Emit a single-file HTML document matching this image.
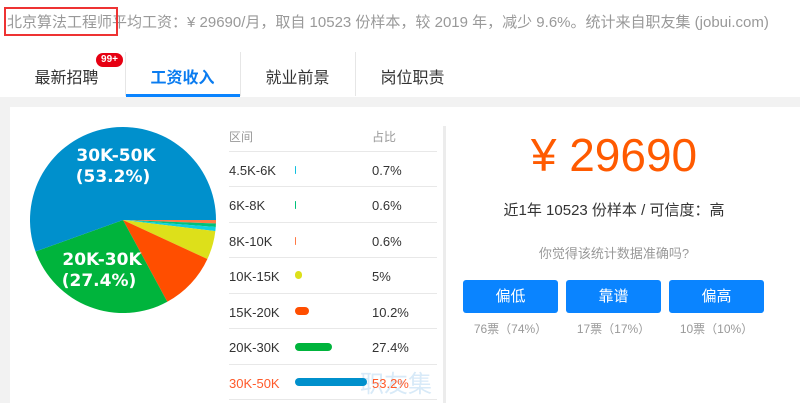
<!DOCTYPE html>
<html><head><meta charset="utf-8"><style>
*{margin:0;padding:0;box-sizing:border-box}
body{width:800px;height:403px;overflow:hidden;background:#fff;font-family:"Liberation Sans","Noto Sans CJK SC",sans-serif;position:relative}
.a{position:absolute;white-space:nowrap}
.top{left:7px;top:11px;font-size:15px;color:#999}
.rbox{left:4px;top:7px;width:114px;height:29px;border:2px solid #e33}
.tab{top:64px;font-size:16px;color:#333;width:115px;text-align:center}
.sep{top:52px;width:1px;height:44px;background:#e6e6e6}
.gray{left:0;top:97px;width:800px;height:306px;background:#f2f2f2}
.panel{left:10px;top:107px;width:790px;height:296px;background:#fff}
.row{left:229px;width:208px;height:1px;background:#e8e8e8}
.lbl{left:229px;font-size:13px;color:#333}
.pct{left:372px;font-size:13px;color:#333}
.bar{left:295px;height:8px;border-radius:4px}
.btn{top:280px;width:95px;height:33px;background:#0a84ff;border-radius:3px;color:#fff;font-size:15px;text-align:center;line-height:33px}
.vote{top:320px;font-size:12px;color:#999;width:95px;text-align:center}
</style></head><body>
<div class="a top">北京算法工程师平均工资：¥ 29690/月，取自 10523 份样本，较 2019 年，减少 9.6%。统计来自职友集 (jobui.com)</div>
<div class="a rbox"></div>
<div class="a tab" style="left:9px">最新招聘</div>
<div class="a" style="left:96px;top:53px;width:27px;height:14px;background:#e60012;border-radius:7px;color:#fff;font-size:10px;font-weight:bold;text-align:center;line-height:14px">99+</div>
<div class="a tab" style="left:125px;color:#0a7cf0;font-weight:bold">工资收入</div>
<div class="a" style="left:126px;top:94px;width:114px;height:3px;background:#0a84ff"></div>
<div class="a tab" style="left:240px">就业前景</div>
<div class="a tab" style="left:355px">岗位职责</div>
<div class="a sep" style="left:125px"></div>
<div class="a sep" style="left:240px"></div>
<div class="a sep" style="left:355px"></div>
<div class="a gray"></div>
<div class="a panel"></div>
<svg class="a" style="left:0;top:0" width="240" height="403">
<path d="M123 220L216 220A93 93 0 0 1 215.93 223.5Z" fill="#ff7a45"/>
<path d="M123 220L215.93 223.5A93 93 0 0 1 215.74 227Z" fill="#00c07a"/>
<path d="M123 220L215.74 227A93 93 0 0 1 215.34 231.08Z" fill="#10d0e0"/>
<path d="M123 220L215.34 231.08A93 93 0 0 1 207.4 259.06Z" fill="#dde01a"/>
<path d="M123 220L207.4 259.06A93 93 0 0 1 167.3 301.8Z" fill="#ff4e00"/>
<path d="M123 220L167.3 301.8A93 93 0 0 1 35.5 251.5Z" fill="#00b43c"/>
<path d="M123 220L35.5 251.5A93 93 0 1 1 216 220Z" fill="#0090cc"/>
<g fill="#fff" font-weight="bold" font-size="17" text-anchor="middle" font-family="DejaVu Sans,sans-serif">
<text x="116" y="161">30K-50K</text><text x="113" y="182">(53.2%)</text>
<text x="102" y="265">20K-30K</text><text x="99" y="286">(27.4%)</text></g>
</svg>
<div class="a" style="left:229px;top:128px;font-size:12px;color:#999">区间</div>
<div class="a" style="left:372px;top:128px;font-size:12px;color:#999">占比</div>
<div class="a row" style="top:151px"></div>
<div class="a lbl" style="top:163px">4.5K-6K</div><div class="a pct" style="top:163px">0.7%</div><div class="a bar" style="top:166px;width:1px;background:#10c0e0"></div>
<div class="a row" style="top:186px"></div>
<div class="a lbl" style="top:198px">6K-8K</div><div class="a pct" style="top:198px">0.6%</div><div class="a bar" style="top:201px;width:1px;background:#00c07a"></div>
<div class="a row" style="top:222px"></div>
<div class="a lbl" style="top:234px">8K-10K</div><div class="a pct" style="top:234px">0.6%</div><div class="a bar" style="top:237px;width:1px;background:#ff7a45"></div>
<div class="a row" style="top:257px"></div>
<div class="a lbl" style="top:269px">10K-15K</div><div class="a pct" style="top:269px">5%</div><div class="a bar" style="top:271px;width:7px;background:#dde01a"></div>
<div class="a row" style="top:293px"></div>
<div class="a lbl" style="top:305px">15K-20K</div><div class="a pct" style="top:305px">10.2%</div><div class="a bar" style="top:307px;width:14px;background:#ff4e00"></div>
<div class="a row" style="top:328px"></div>
<div class="a lbl" style="top:340px">20K-30K</div><div class="a pct" style="top:340px">27.4%</div><div class="a bar" style="top:343px;width:37px;background:#00b43c"></div>
<div class="a row" style="top:364px"></div>
<div class="a" style="left:360px;top:364px;font-size:24px;color:#d8eaf8">职友集</div>
<div class="a lbl" style="top:376px;color:#ff5a2a">30K-50K</div><div class="a pct" style="top:376px;color:#ff5a2a">53.2%</div><div class="a bar" style="top:378px;width:72px;background:#0090cc"></div>
<div class="a row" style="top:399px"></div>
<div class="a" style="left:443px;top:126px;width:3px;height:277px;background:#ececec"></div>
<div class="a" style="left:454px;top:128px;width:320px;text-align:center;font-size:46px;color:#ff5a00">¥ 29690</div>
<div class="a" style="left:454px;top:199px;width:320px;text-align:center;font-size:15px;color:#333">近1年 10523 份样本 / 可信度：高</div>
<div class="a" style="left:454px;top:243px;width:320px;text-align:center;font-size:13px;color:#999">你觉得该统计数据准确吗?</div>
<div class="a btn" style="left:463px">偏低</div>
<div class="a btn" style="left:566px">靠谱</div>
<div class="a btn" style="left:669px">偏高</div>
<div class="a vote" style="left:463px">76票（74%）</div>
<div class="a vote" style="left:566px">17票（17%）</div>
<div class="a vote" style="left:669px">10票（10%）</div>
</body></html>
